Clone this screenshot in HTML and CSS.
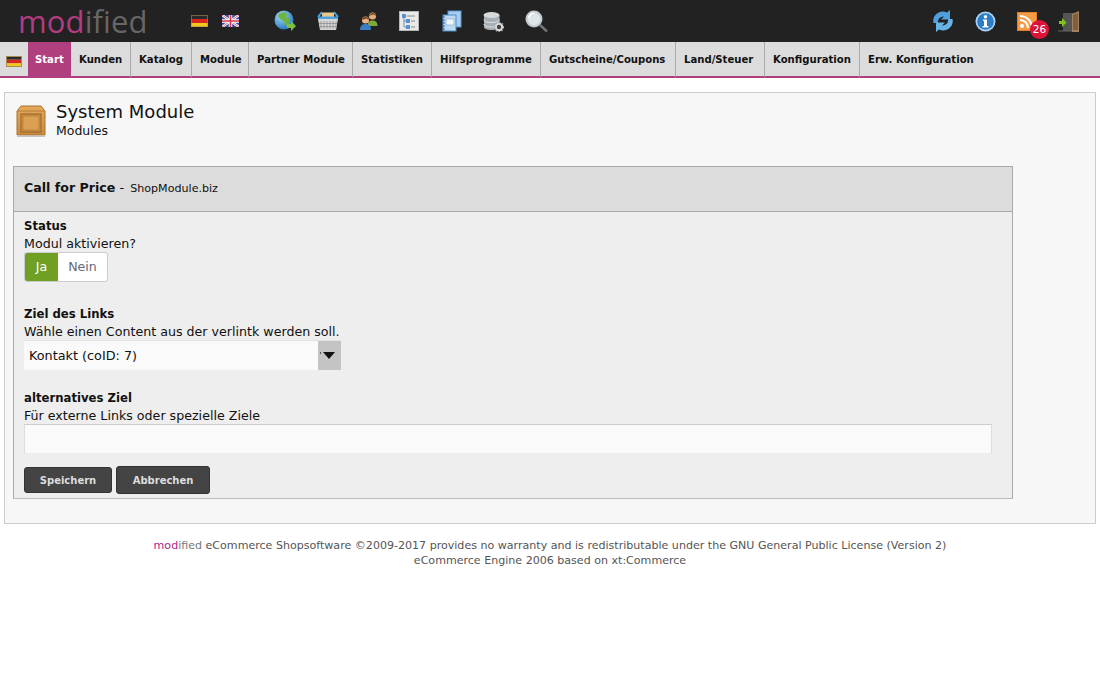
FILE: index.html
```html
<!DOCTYPE html>
<html lang="de">
<head>
<meta charset="utf-8">
<title>System Module</title>
<link rel="stylesheet" href="styles.css">
</head>
<body>
<header class="topbar">
  <div class="logo"><span class="logo-a">mod</span><span class="logo-b">ified</span></div>
  <div class="flags">
    <svg class="flag" viewBox="0 0 17 12" width="17" height="12"><rect width="17" height="4" fill="#2a2a2a"/><rect y="4" width="17" height="4" fill="#d8261c"/><rect y="8" width="17" height="4" fill="#f2c81e"/><rect x=".5" y=".5" width="16" height="11" fill="none" stroke="#a58c55" stroke-opacity=".6"/></svg>
    <svg class="flag" viewBox="0 0 17 12" width="17" height="12"><rect width="17" height="12" fill="#3b4f9e"/><path d="M0 0L17 12M17 0L0 12" stroke="#fff" stroke-width="2.4"/><path d="M0 0L17 12M17 0L0 12" stroke="#d5455a" stroke-width=".8"/><path d="M8.5 0V12M0 6H17" stroke="#fff" stroke-width="3.4"/><path d="M8.5 0V12M0 6H17" stroke="#d5344a" stroke-width="1.6"/></svg>
  </div>
  <nav class="tools">
    <svg class="tool t-globe" viewBox="0 0 22 22" width="22" height="22"><defs><radialGradient id="gl" cx=".35" cy=".3" r=".8"><stop offset="0" stop-color="#9fdcf5"/><stop offset="1" stop-color="#1b6fb8"/></radialGradient></defs><circle cx="10" cy="10" r="9.500" fill="url(#gl)"/><path d="M5 4l5-2 3 2-1 3 3 1 1 4-3 4-2-1-1-4-4-2-2-3z" fill="#6db33f"/><path d="M13 14h4v-3l5 5-5 5v-3h-4z" fill="#7cc13c"/></svg>
    <svg class="tool t-basket" viewBox="0 0 22 20" width="22" height="20"><path d="M1 8h20l-2 11H3z" fill="#d8d8d8"/><path d="M4 10v8M7 10v8M10 10v8M13 10v8M16 10v8M19 10v8M2 12.500h18M3 15.500h16" stroke="#8f8f8f" stroke-width=".8"/><rect x="5" y="1.500" width="12" height="5" fill="#e8c98c"/><path d="M1 6L5 1M21 6L17 1" stroke="#4fa3dd" stroke-width="2"/><rect x="1" y="5.500" width="20" height="2.500" fill="#4fa3dd"/></svg>
    <svg class="tool t-users" viewBox="0 0 20 20" width="20" height="20"><circle cx="13.500" cy="5" r="3.600" fill="#e4ad7c"/><path d="M9.800 5a3.800 3.800 0 0 1 7.400 0l-3-1.500z" fill="#7a4a20"/><path d="M8.500 15c0-4 2-5.500 5-5.500s5 1.500 5 5.500z" fill="#7da83c"/><circle cx="6.500" cy="9" r="3.600" fill="#e8b58a"/><path d="M2.800 9a3.800 3.800 0 0 1 7.400 0l-3-1.500z" fill="#6a3d1a"/><path d="M1 19c0-4 2-6 5.500-6s5.500 2 5.500 6z" fill="#3a7ec4"/></svg>
    <svg class="tool t-tree" viewBox="0 0 20 20" width="20" height="20"><rect width="20" height="20" fill="#e9e9e9"/><rect x=".5" y=".5" width="19" height="19" fill="none" stroke="#b5b5b5"/><path d="M5 5v11h3M5 10h3" stroke="#6d8fb5" fill="none"/><rect x="3" y="3" width="4" height="4" fill="#5a93cc"/><rect x="7" y="8" width="4" height="4" fill="#5a93cc"/><rect x="7" y="14" width="4" height="4" fill="#5a93cc"/><path d="M8 5h8M12 10h4M12 16h4" stroke="#888"/></svg>
    <svg class="tool t-book" viewBox="0 0 20 22" width="20" height="22"><rect x="6" y="1" width="13" height="16" fill="#a9cdee" stroke="#5b96cf"/><rect x="1" y="5" width="13" height="16" fill="#bcd9f2" stroke="#4f8bc6"/><rect x="4" y="9" width="8" height="6" fill="#eef5fb" stroke="#7ba3c8" stroke-width=".6"/><path d="M1 7h2M1 10h2M1 13h2M1 16h2M1 19h2" stroke="#2f6ca8"/></svg>
    <svg class="tool t-db" viewBox="0 0 21 21" width="21" height="21"><path d="M1 4v12c0 2 3 3 7.500 3s8-1 8-3V4z" fill="#a7aeb4"/><ellipse cx="8.500" cy="4" rx="8" ry="3" fill="#d5d9dc"/><path d="M1 8.500c0 2 3 3 7.500 3s8-1 8-3M1 13c0 2 3 3 7.500 3s8-1 8-3" fill="none" stroke="#e2e5e7"/><circle cx="16" cy="16" r="3.200" fill="#444" stroke="#ddd" stroke-width="2"/><circle cx="16" cy="16" r="4.600" fill="none" stroke="#aaa" stroke-width="1.200" stroke-dasharray="1.500 1.500"/></svg>
    <svg class="tool t-search" viewBox="0 0 23 22" width="23" height="22"><circle cx="9" cy="9" r="7.500" fill="#dfe6ea" stroke="#c2c9cd" stroke-width="2"/><path d="M4 8a5 5 0 0 1 5-5" stroke="#fff" stroke-width="1.500" fill="none"/><path d="M15 15l7 6.500" stroke="#777" stroke-width="2.400"/></svg>
  </nav>
  <div class="actions">
    <svg class="tool a-sync" viewBox="0 0 22 22" width="22" height="22"><path d="M1.500 13A9.500 9.500 0 0 1 15 2.500L18 0v9.500h-9L12 6.500A5.500 5.500 0 0 0 6 13z" fill="#4e9fdb"/><path d="M20.500 9A9.500 9.500 0 0 1 7 19.500L4 22v-9.500h9L10 15.500A5.500 5.500 0 0 0 16 9z" fill="#67b2e6"/></svg>
    <svg class="tool a-info" viewBox="0 0 21 21" width="21" height="21"><circle cx="10.500" cy="10.500" r="10" fill="#a9d3f3"/><circle cx="10.500" cy="10.500" r="8.300" fill="#2d7cc7"/><circle cx="10.500" cy="5.800" r="1.700" fill="#fff"/><path d="M8 8.500h4v6.500h1.500v1.500h-6V15H9v-5H8z" fill="#fff"/></svg>
    <div class="rss">
      <svg viewBox="0 0 20 19" width="20" height="19"><rect width="20" height="19" fill="#f59b45"/><rect x=".5" y=".5" width="19" height="18" fill="none" stroke="#e27f20"/><circle cx="5" cy="14" r="2" fill="#fff"/><path d="M3 8a8 8 0 0 1 8 8M3 4a12 12 0 0 1 12 12" fill="none" stroke="#fff" stroke-width="2.200"/></svg>
      <span class="badge">26</span>
    </div>
    <svg class="tool a-door" viewBox="0 0 22 21" width="22" height="21"><path d="M5 2h16v18H5z" fill="#555"/><path d="M14 3l7-3v21h-7z" fill="#a5825b"/><path d="M15 4l5-2v17h-5z" fill="#7b6144"/><path d="M1 10h3V7l4.500 4.500L4 16v-3H1z" fill="#7fc31c"/><rect y="19.500" width="14" height="1" fill="#666"/></svg>
  </div>
</header>

<div class="menu">
  <svg class="menu-flag" viewBox="0 0 16 11" width="16" height="11"><rect width="16" height="3.700" fill="#2a2a2a"/><rect y="3.700" width="16" height="3.700" fill="#d8261c"/><rect y="7.400" width="16" height="3.600" fill="#f2c81e"/><rect x=".5" y=".5" width="15" height="10" fill="none" stroke="#a58c55"/></svg>
  <a class="menu-item active">Start</a>
  <a class="menu-item">Kunden</a>
  <a class="menu-item">Katalog</a>
  <a class="menu-item">Module</a>
  <a class="menu-item">Partner Module</a>
  <a class="menu-item">Statistiken</a>
  <a class="menu-item">Hilfsprogramme</a>
  <a class="menu-item">Gutscheine/Coupons</a>
  <a class="menu-item">Land/Steuer</a>
  <a class="menu-item">Konfiguration</a>
  <a class="menu-item last">Erw. Konfiguration</a>
</div>

<main class="page">
  <div class="page-head">
    <svg class="page-icon" viewBox="0 0 30 32" width="30" height="32"><defs><linearGradient id="box" x1="0" y1="0" x2="0" y2="1"><stop offset="0" stop-color="#e6a95c"/><stop offset="1" stop-color="#c98a3c"/></linearGradient></defs><path d="M1 6l4-5h20l4 5v24H1z" fill="url(#box)" stroke="#a87332"/><path d="M1 6h28" stroke="#b97f38"/><rect x="5" y="9" width="20" height="18" fill="#d29445" stroke="#8e6128"/><rect x="7" y="11" width="16" height="14" fill="#dba052" stroke="#a87332" stroke-width=".6"/><rect x="1" y="30.500" width="28" height="1.500" fill="#c4c4c4"/></svg>
    <div>
      <h1 class="page-title">System Module</h1>
      <div class="page-sub">Modules</div>
    </div>
  </div>

  <section class="panel">
    <div class="panel-head"><b class="panel-title">Call for Price</b> - <span class="panel-by">ShopModule.biz</span></div>
    <form class="panel-body">
      <div class="field first">
        <div class="label">Status</div>
        <div class="desc">Modul aktivieren?</div>
        <div class="toggle"><span class="toggle-on">Ja</span><span class="toggle-off">Nein</span></div>
      </div>
      <div class="field">
        <div class="label">Ziel des Links</div>
        <div class="desc">Wähle einen Content aus der verlintk werden soll.</div>
        <div class="select"><span class="select-value">Kontakt (coID: 7)</span><span class="select-arrow"></span></div>
      </div>
      <div class="field">
        <div class="label">alternatives Ziel</div>
        <div class="desc">Für externe Links oder spezielle Ziele</div>
        <div class="text-input"></div>
      </div>
      <div class="buttons">
        <span class="btn save">Speichern</span>
        <span class="btn cancel">Abbrechen</span>
      </div>
    </form>
  </section>
</main>

<footer class="footer">
  <div><span class="foot-mod">mod</span><span class="foot-ified">ified</span> eCommerce Shopsoftware ©2009-2017 provides no warranty and is redistributable under the GNU General Public License (Version 2)</div>
  <div>eCommerce Engine 2006 based on xt:Commerce</div>
</footer>
</body>
</html>
```
FILE: styles.css
```css
* { box-sizing: border-box; }
html, body { margin: 0; padding: 0; background: #fff; }
body { font-family: "DejaVu Sans", Verdana, sans-serif; color: #111; font-size: 12px; }

.topbar { height: 42px; background: #222; display: flex; align-items: center; position: relative; }
.logo { width: 191px; padding-left: 18px; font-family: "Open Sans", sans-serif; font-size: 31px; font-weight: 500; line-height: 42px; letter-spacing: .1px; height: 42px; white-space: nowrap; }
.logo-a { color: #b13c80; }
.logo-b { color: #666; }
.flags { display: flex; gap: 14px; width: 84px; align-items: center; }
.flag { display: block; }
.tools { display: flex; align-items: center; }
.tool { display: block; flex: none; }
.t-globe { margin-left: -1px; margin-right: 21px; }
.t-basket { margin-right: 20px; }
.t-users { margin-right: 20px; }
.t-tree { margin-right: 23px; }
.t-book { margin-right: 21px; }
.t-db { margin-right: 21px; }
.actions { margin-left: auto; display: flex; align-items: center; padding-right: 20px; }
.a-sync { margin-right: 21px; }
.a-info { margin-right: 21px; }
.rss { position: relative; width: 20px; height: 19px; margin-right: 21px; }
.rss svg { display: block; }
.badge { position: absolute; left: 13px; top: 8px; width: 19px; height: 19px; border-radius: 50%; background: #dc143c; color: #fff; font-size: 10.5px; line-height: 19px; text-align: center; }

.menu { height: 36px; background: #dcdcdc; border-bottom: 2px solid #b03f7f; display: grid; grid-template-columns: 28px 43px 60px 61px 57px 104px 79px 109px 135px 89px 95px 1fr; }
.menu-flag { margin: 14px 0 0 6px; }
.menu-item { display: block; padding-left: 8px; line-height: 35px; font-size: 10.1px; font-weight: bold; color: #111; border-right: 1px solid #aaa; white-space: nowrap; }
.menu-item.active { background: #b03f7f; color: #fff; padding-left: 7px; border-right: 0; }
.menu-item.last { border-right: 0; }

.page { margin: 14px 4px 0; height: 432px; background: #f7f7f7; border: 1px solid #ccc; padding: 8px 8px 0; }
.page-head { display: flex; height: 65px; padding-left: 3px; }
.page-icon { margin: 4px 10px 0 0; flex: none; }
.page-title { margin: 0; font-size: 18px; font-weight: normal; line-height: 22px; color: #111; }
.page-sub { font-size: 12.5px; line-height: 16px; }

.panel { width: 1000px; height: 333px; border: 1px solid #aaa; border-bottom-color: #bbb; background: #eee; }
.panel-head { height: 45px; background: #dcdcdc; border-bottom: 1px solid #aaa; line-height: 41px; padding-left: 10px; font-size: 13px; }
.panel-title { font-size: 12.6px; }
.panel-by { font-size: 11.1px; margin-left: 2px; }
.panel-body { padding: 5px 10px 0; }
.field { margin-bottom: 19px; }
.field.first { margin-bottom: 23px; }
.label { font-weight: bold; line-height: 18px; font-size: 11.7px; }
.desc { line-height: 18px; font-size: 12.65px; }
.toggle { display: flex; width: 84px; height: 30px; margin-top: -1px; border: 1px solid #ccc; border-radius: 3px; overflow: hidden; background: #fff; font-size: 12.6px; }
.toggle-on { width: 33px; background: #6f9f23; color: #fff; text-align: center; line-height: 27px; }
.toggle-off { flex: 1; color: #667; text-align: center; line-height: 27px; }
.select { display: flex; width: 317px; height: 30px; margin-top: -1px; background: #fafafa; border-top: 1px solid #e2e2e2; }
.select-value { flex: 1; padding-left: 5px; line-height: 29px; font-size: 12.8px; }
.select-arrow { width: 23px; background: #c4c4c4; position: relative; }
.select-arrow::before { content: ""; position: absolute; left: 2px; top: 11px; width: 1px; height: 2px; background: #555; }
.select-arrow::after { content: ""; position: absolute; left: 5px; top: 11px; border: 6px solid transparent; border-top: 7px solid #111; border-bottom: 0; }
.text-input { width: 968px; height: 30px; margin-top: -1px; background: #fafafa; border: 1px solid #ddd; border-top-color: #ccc; border-bottom-color: #eee; }
.buttons { display: flex; gap: 4px; align-items: center; margin-top: -7px; }
.btn { display: block; background: #444; color: #ddd; font-size: 10px; font-weight: bold; text-align: center; border: 1px solid #333; border-radius: 3px; }
.save { width: 88px; height: 26px; line-height: 25px; }
.cancel { width: 94px; height: 28px; line-height: 27px; }

.footer { margin-top: 14px; text-align: center; font-size: 11.07px; line-height: 15px; color: #555; }
.foot-mod { color: #b0218a; }
.foot-ified { color: #777; }
```
